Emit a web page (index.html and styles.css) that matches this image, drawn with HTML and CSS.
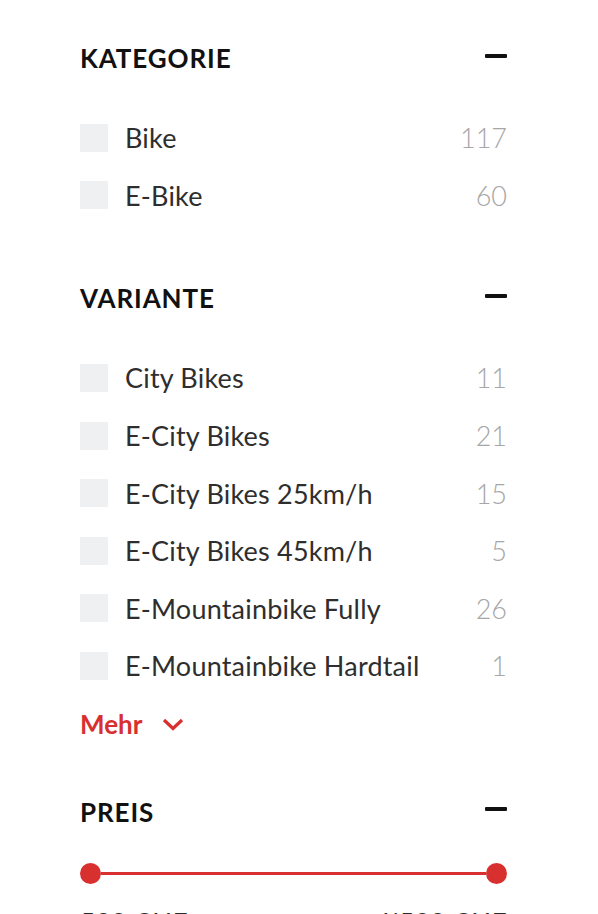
FILE: index.html
```html
<!DOCTYPE html>
<html lang="de">
<head>
    <meta charset="UTF-8">
    <meta name="viewport" content="width=device-width, initial-scale=1.0">
    <title>Filter</title>
    <link rel="stylesheet" href="styles.css">
</head>
<body>
    <div class="filters">
        <div class="filter-section">
            <div class="filter-head">
                <h2>KATEGORIE</h2>
                <span class="toggle"></span>
            </div>
            <ul class="filter-list">
                <li><span class="box"></span><span class="label">Bike</span><span class="count">117</span></li>
                <li><span class="box"></span><span class="label">E-Bike</span><span class="count">60</span></li>
            </ul>
        </div>

        <div class="filter-section">
            <div class="filter-head">
                <h2>VARIANTE</h2>
                <span class="toggle"></span>
            </div>
            <ul class="filter-list">
                <li><span class="box"></span><span class="label">City Bikes</span><span class="count">11</span></li>
                <li><span class="box"></span><span class="label">E-City Bikes</span><span class="count">21</span></li>
                <li><span class="box"></span><span class="label">E-City Bikes 25km/h</span><span class="count">15</span></li>
                <li><span class="box"></span><span class="label">E-City Bikes 45km/h</span><span class="count">5</span></li>
                <li><span class="box"></span><span class="label">E-Mountainbike Fully</span><span class="count">26</span></li>
                <li><span class="box"></span><span class="label">E-Mountainbike Hardtail</span><span class="count">1</span></li>
            </ul>
            <a class="more" href="#">Mehr
                <svg width="22" height="13" viewBox="0 0 22 13"><polyline points="2,2 11,10.5 20,2" fill="none" stroke="#d8302f" stroke-width="3.2"/></svg>
            </a>
        </div>

        <div class="filter-section">
            <div class="filter-head">
                <h2>PREIS</h2>
                <span class="toggle"></span>
            </div>
            <div class="range">
                <span class="knob"></span>
                <span class="track"></span>
                <span class="knob"></span>
            </div>
            <div class="range-values">
                <span>500 CHF</span>
                <span>1'500 CHF</span>
            </div>
        </div>
    </div>
</body>
</html>
```

FILE: styles.css
```css
body {
    margin: 0;
    padding: 0;
    background-color: #fff;
    font-family: Lato, "Noto Sans", sans-serif;
    color: #2b2b2b;
}
.filters {
    padding: 42px 91px 0 80px;
}
.filter-section {
    margin-bottom: 58px;
}
.filter-section:nth-child(2) {
    margin-bottom: 56px;
}
.filter-head {
    display: flex;
    justify-content: space-between;
    align-items: center;
    height: 32px;
}
.filter-head h2 {
    margin: 0;
    font-size: 26px;
    line-height: 32px;
    font-weight: 700;
    color: #111;
    letter-spacing: 0.9px;
}
.toggle {
    width: 22px;
    height: 4px;
    background-color: #111;
    border-radius: 1px;
    margin-top: -5px;
}
.filter-list {
    list-style: none;
    margin: 35px 0 0;
    padding: 0;
}
.filter-list li {
    display: flex;
    align-items: center;
    height: 57.6px;
    font-size: 27px;
}
.box {
    width: 28px;
    height: 28px;
    background-color: #eff0f1;
    margin-right: 17px;
    flex-shrink: 0;
}
.label {
    flex: 1;
    color: #2e2e2e;
    letter-spacing: 0.2px;
}
.count {
    color: #a6a6a6;
    font-weight: 300;
}
.more {
    display: flex;
    align-items: center;
    gap: 20px;
    margin-top: 13px;
    height: 32px;
    font-size: 26px;
    font-weight: 700;
    color: #d8302f;
    text-decoration: none;
}
.more svg {
    margin-top: 1px;
}
.range {
    display: flex;
    align-items: center;
    margin-top: 36px;
    height: 20px;
}
.knob {
    width: 21px;
    height: 21px;
    border-radius: 50%;
    background-color: #d8302f;
    flex-shrink: 0;
}
.track {
    flex: 1;
    height: 3px;
    background-color: #d8302f;
}
.range-values {
    display: flex;
    justify-content: space-between;
    margin-top: 23px;
    font-size: 26px;
    line-height: 32px;
    color: #2b2b2b;
    letter-spacing: 0.6px;
}
```
